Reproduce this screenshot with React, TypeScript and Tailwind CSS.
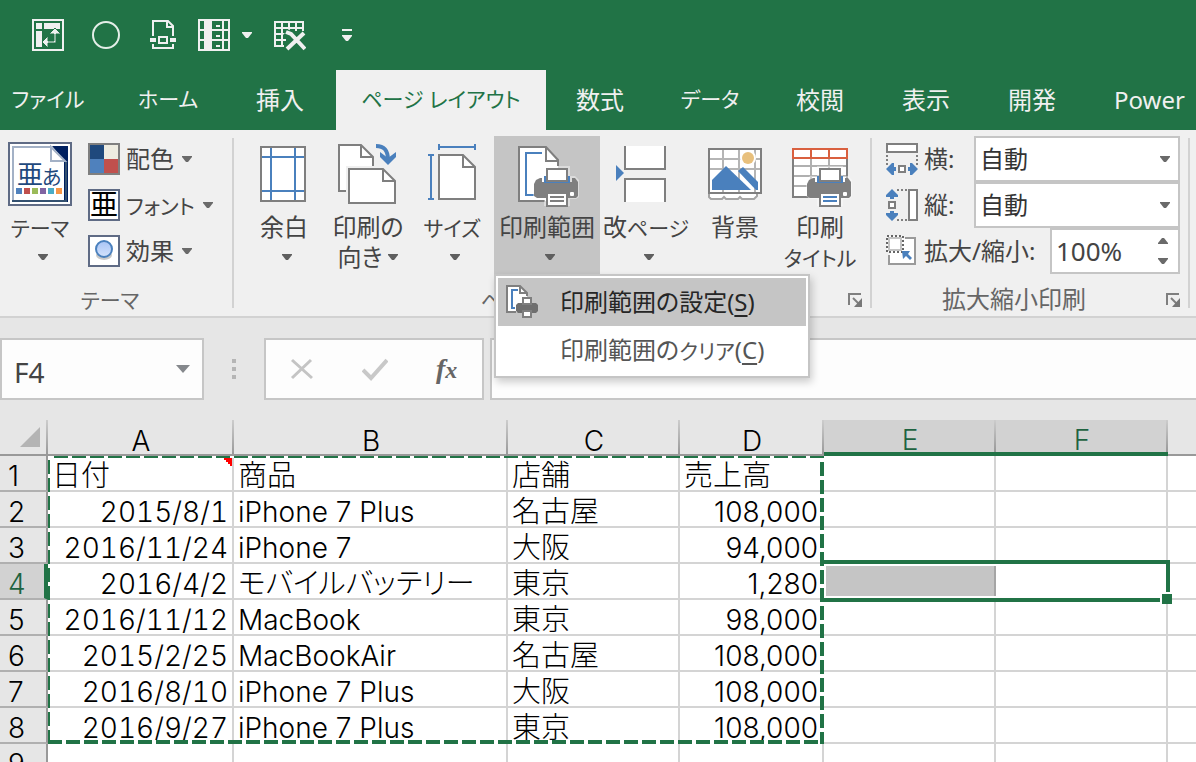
import React, { useState } from 'react'
import clsx from 'clsx'

const UI_FONT =
    "font-['Noto_Sans','Noto_Sans_CJK_JP',sans-serif] [font-feature-settings:'palt']"
const CELL_FONT =
    "font-['Inter','Noto_Sans_CJK_JP',sans-serif] [font-feature-settings:'palt'] font-light"

const GRAY = '#7f7f7f'
const BLUE = '#4a80bd'

type IconProps = { className?: string }

const isKana = (text: string) => /^[\u30a0-\u30ff ]+$/.test(text)
const isJapanese = (text: string) => /[\u3040-\u9fff]/.test(text)

/* ---------- small glyphs ---------- */

const Caret = ({ className = 'text-[#6a6a6a]' }: IconProps) => (
    <svg
        width="10"
        height="6"
        viewBox="0 0 10 6"
        className={clsx('shrink-0', className)}
        aria-hidden="true"
    >
        <path d="M0 0h10v1L6 6H4L0 1z" fill="currentColor" />
    </svg>
)

const Launcher = ({ label }: { label: string }) => (
    <button type="button" aria-label={label} className="absolute right-2 top-2">
        <svg width="14" height="16" viewBox="0 0 14 16">
            <path d="M1 13V2h12" fill="none" stroke={GRAY} strokeWidth="2" />
            <path d="M5 6l7 7" stroke={GRAY} strokeWidth="2" />
            <path d="M14 6v9H6z" fill="#777" />
        </svg>
    </button>
)

/* ---------- quick access icons ---------- */

const PivotIcon = () => (
    <svg width="32" height="32" viewBox="0 0 32 32" fill="#f0f0f0">
        <rect x="1" y="1" width="30" height="30" fill="none" stroke="#f0f0f0" strokeWidth="2" />
        <path d="M4 4h6v6H4zM12 4h16v6H12zM4 12h6v16H4z" />
        <path d="M23 9l6 6h-5v9h-8v5l-6-6 6-6v5h6v-7h-5z" stroke="#217346" />
    </svg>
)

const CircleIcon = () => (
    <svg width="28" height="28" viewBox="0 0 28 28">
        <circle cx="14" cy="14" r="13" fill="none" stroke="#e4eee8" strokeWidth="2" />
    </svg>
)

const PrintPreviewIcon = () => (
    <svg width="26" height="30" viewBox="0 0 26 30" fill="none" stroke="#f0f0f0" strokeWidth="2">
        <path d="M3 16V1h15l5 5v10M17 1v6h6" />
        <path d="M3 24v4h20v-4" />
        <rect x="9" y="17" width="8" height="6" />
        <path d="M0 20h6M20 20h6" strokeWidth="4" />
    </svg>
)

const FreezeIcon = () => (
    <svg width="32" height="32" viewBox="0 0 32 32">
        <rect width="32" height="32" fill="#f0f0f0" />
        <path
            d="M2 2h4v8H2zM2 12h4v8H2zM2 22h4v8H2zM14 2h10v8H14zM14 12h10v8H14zM14 22h10v8H14zM26 2h4v8h-4zM26 12h4v8h-4zM26 22h4v8h-4z"
            fill="#217346"
        />
        <path d="M18 7h4M18 17h4M18 27h4" stroke="#f0f0f0" strokeWidth="2" />
    </svg>
)

const DeleteTableIcon = () => (
    <svg width="32" height="32" viewBox="0 0 32 32" fill="none" stroke="#f0f0f0" strokeWidth="2">
        <path d="M0 3h30M1 2v26M0 9h30M29 2v10M8 2v24M15 2v16M22 2v10M0 15h16M0 21h12M0 27h10" />
        <path d="M12 13l17 17M30 14L13 30" stroke="#217346" strokeWidth="8" />
        <path d="M12 13l5 2 14 15M30 14L13 30" strokeWidth="4" />
    </svg>
)

/* ---------- ribbon icons ---------- */

const Printer = ({ lines = GRAY }: { lines?: string }) => (
    <g>
        <path
            d="M29 24h26v10h5l4 4v17l-3 2h-6v7H29v-7h-7l-4-3V38l4-4h7z"
            fill="#fff"
            opacity=".4"
        />
        <path
            d="M19 42l2-4 4-2h2v4h30v-4h3l3 4v14l-2 2H22l-3-2z"
            fill={GRAY}
        />
        <rect x="29" y="34" width="26" height="7" fill={BLUE} />
        <rect x="32" y="27" width="20" height="12" fill="#fff" stroke={GRAY} strokeWidth="2" />
        <rect x="55" y="50" width="4" height="4" rx="1" fill="#fff" />
        <rect x="32" y="51" width="20" height="13" fill="#fff" stroke={GRAY} strokeWidth="2" />
        <path d="M35 55h14M35 59h14" stroke={lines} strokeWidth="2" />
    </g>
)

const IconFrame = ({ children }: { children: React.ReactNode }) => (
    <svg width="64" height="66" viewBox="0 0 64 66" fill="none" strokeWidth="2" aria-hidden="true">
        {children}
    </svg>
)

const ThemeIcon = () => (
    <IconFrame>
        <rect x="1" y="1" width="62" height="62" fill="#fff" stroke="#5f6b85" />
        <path d="M44 4h16v56h-4V18z" fill="#002060" />
        <path d="M5 60V5h38" stroke="#a3b1c6" />
        <path d="M4 59h54V20" stroke="#33506f" />
        <path d="M43 5v14h14z" fill="#fff" stroke="#a3b1c6" />
        <text x="9" y="42" fontSize="26" fill="#1f497d">亜</text>
        <text x="34" y="43" fontSize="20" fill="#1f497d">あ</text>
        <path d="M8 46h6v6H8z" fill="#4f81bd" />
        <path d="M16 46h6v6h-6z" fill="#c0504d" />
        <path d="M24 46h6v6h-6z" fill="#9bbb59" />
        <path d="M32 46h6v6h-6z" fill="#8064a2" />
        <path d="M40 46h6v6h-6z" fill="#4bacc6" />
        <path d="M48 46h6v6h-6z" fill="#f79646" />
    </IconFrame>
)

const MarginsIcon = () => (
    <IconFrame>
        <rect x="9" y="5" width="44" height="54" fill="#fff" stroke={GRAY} />
        <path d="M19 6v52M43 6v52M10 15h42M10 49h42" stroke={BLUE} />
    </IconFrame>
)

const OrientationIcon = () => (
    <IconFrame>
        <path d="M3 3h22l12 12v34H3z" fill="#fff" stroke={GRAY} />
        <path d="M25 3v12h12" stroke={GRAY} />
        <path d="M10 24h42l12 12v28H10z" fill="#f0f0f0" />
        <path d="M13 27h34l12 12v22H13z" fill="#fff" stroke={GRAY} />
        <path d="M47 27v12h12" stroke={GRAY} />
        <path d="M40 4c8 0 12 4 12 14" stroke={BLUE} strokeWidth="4" />
        <path d="M44 10v5l8 8 8-8v-5l-8 6z" fill={BLUE} />
    </IconFrame>
)

const SizeIcon = () => (
    <IconFrame>
        <path d="M19 13h24l12 12v32H19z" fill="#fff" stroke={GRAY} />
        <path d="M43 13v12h12" stroke={GRAY} />
        <path d="M19 5h36M19 2v6M55 2v6M11 13v44M8 13h6M8 57h6" stroke={BLUE} />
    </IconFrame>
)

const PrintAreaIcon = () => (
    <IconFrame>
        <path d="M4 5h27l12 13v41H4z" fill="#fff" />
        <path d="M30 59H4V5h27l12 13v6M31 5v14h12" stroke={GRAY} />
        <path d="M27 11H11v42h9" stroke={BLUE} />
        <Printer />
    </IconFrame>
)

const BreaksIcon = () => (
    <IconFrame>
        <path d="M11 4v23h40V4" fill="#fff" stroke={GRAY} />
        <path d="M11 60V37h40v23" fill="#fff" stroke={GRAY} />
        <path d="M2 23l8 8-8 8z" fill={BLUE} />
    </IconFrame>
)

const BackgroundIcon = () => (
    <IconFrame>
        <rect x="6" y="7" width="52" height="44" fill="#fff" />
        <path d="M20 7v44M36 7v44M52 7v44M6 17h52M6 27h52" stroke="#b5b5b5" />
        <rect x="6" y="7" width="52" height="44" stroke={GRAY} />
        <path d="M6 52v3l2 2h11l2-2 2 2h12l2-2 2 2h12l3-3v-2" fill="#fff" stroke="#a5a5a5" />
        <circle cx="45" cy="16" r="8" fill="#fff" />
        <circle cx="45" cy="16" r="6" fill="#e8c07d" />
        <path d="M9 48V38l14-14 25 24z" fill={BLUE} />
        <path d="M35 29l5-4 15 15v8h-2z" fill={BLUE} />
    </IconFrame>
)

const PrintTitlesIcon = () => (
    <IconFrame>
        <rect x="5" y="7" width="54" height="48" fill="#fff" />
        <path d="M23 16v38M41 16v38M6 24h52M6 34h52M6 44h52" stroke="#b0b0b0" />
        <path d="M59 16v39H5V16" stroke={GRAY} />
        <path d="M5 7h54v9H5zM23 7v9M41 7v9" stroke="#d9603f" />
        <Printer lines={BLUE} />
    </IconFrame>
)

const ColorsIcon = () => (
    <svg width="32" height="32" viewBox="0 0 32 32">
        <rect width="32" height="32" fill={GRAY} />
        <path d="M2 2h14v14H2z" fill="#1f497d" />
        <path d="M16 2h14v14H16z" fill="#eeece1" />
        <path d="M2 16h14v14H2z" fill="#4f81bd" />
        <path d="M16 16h14v14H16z" fill="#c0504d" />
    </svg>
)

const FontsIcon = () => (
    <svg width="32" height="32" viewBox="0 0 32 32" className="overflow-visible">
        <rect x="1" y="1" width="30" height="30" fill="#fff" stroke="#5f6b85" strokeWidth="2" />
        <text x="2" y="26" fontSize="28" fill="#000">亜</text>
    </svg>
)

const EffectsIcon = () => (
    <svg width="32" height="32" viewBox="0 0 32 32">
        <defs>
            <linearGradient id="orb" x1="0" y1="0" x2="0" y2="1">
                <stop offset="0" stopColor="#a9c4f5" />
                <stop offset="1" stopColor="#d3e2fc" />
            </linearGradient>
        </defs>
        <rect x="1" y="1" width="30" height="30" fill="#fff" stroke="#5f6b85" strokeWidth="2" />
        <ellipse cx="16" cy="20" rx="8" ry="5" fill="#c9c9c9" />
        <circle cx="16" cy="14" r="8" fill="url(#orb)" stroke={BLUE} strokeWidth="2" />
    </svg>
)

const WidthIcon = () => (
    <svg width="32" height="32" viewBox="0 0 32 32" fill="none" strokeWidth="2">
        <rect x="1" y="1" width="30" height="8" fill="#fff" stroke={GRAY} />
        <path d="M1 12v10M31 12v10" stroke={GRAY} strokeDasharray="2 2" />
        <rect x="13" y="23" width="6" height="6" fill="#fff" stroke={GRAY} />
        <path d="M0 26l6-6h2v4h2v4H8v4H6zM32 26l-6-6h-2v4h-2v4h2v4h2z" fill={BLUE} />
    </svg>
)

const HeightIcon = () => (
    <svg width="32" height="32" viewBox="0 0 32 32" fill="none" strokeWidth="2">
        <rect x="23" y="1" width="8" height="30" fill="#fff" stroke={GRAY} />
        <path d="M11 1h10M11 31h10" stroke={GRAY} strokeDasharray="2 2" />
        <rect x="3" y="13" width="6" height="6" fill="#fff" stroke={GRAY} />
        <path d="M6 0l6 6v2H8v2H4V8H0V6zM6 32l6-6v-2H8v-2H4v2H0v2z" fill={BLUE} />
    </svg>
)

const ScaleIcon = () => (
    <svg width="32" height="32" viewBox="0 0 32 32" fill="none" strokeWidth="2">
        <path d="M3 20v9h26V3H19" fill="#fff" stroke="#9a9a9a" />
        <rect x="1" y="1" width="16" height="16" fill="#fff" stroke="#666" strokeDasharray="2 2" />
        <rect x="3" y="3" width="12" height="12" stroke="#c4c4c4" />
        <path d="M16 16h8l-2 3 4 4-2 2-4-4-3 3z" fill={BLUE} />
    </svg>
)

/* ---------- ribbon parts ---------- */

const tabs = [
    { name: 'ファイル', className: 'w-24 mr-4' },
    { name: 'ホーム', className: 'w-28' },
    { name: '挿入', className: 'w-28' },
    { name: 'ページ レイアウト', className: 'w-[210px]', active: true },
    { name: '数式', className: 'w-27' },
    { name: 'データ', className: 'w-28' },
    { name: '校閲', className: 'w-27' },
    { name: '表示', className: 'w-26' },
    { name: '開発', className: 'w-27' },
    { name: 'Power', className: 'px-7' },
]

// Kana run narrower than kanji in the ribbon
const Label = ({ text }: { text: string }) => (
    <>
        {text.split(/([\u30a0-\u30ff]+)/).map((part, i) => (
            <span key={i} className={clsx(isKana(part) && 'text-[21px]')}>
                {part}
            </span>
        ))}
    </>
)

type BigButtonProps = {
    icon: React.ReactNode
    lines: string[]
    caret?: boolean
    active?: boolean
    className: string
}

function BigButton({ icon, lines, caret = true, active, className }: BigButtonProps) {
    return (
        <button
            type="button"
            aria-haspopup={caret ? 'menu' : undefined}
            aria-expanded={active}
            className={clsx(
                'flex flex-col items-center h-[138px] pt-1.5 shrink-0 text-[24px] leading-[30px] whitespace-nowrap',
                active && 'bg-[#c5c5c5]',
                className
            )}
        >
            {icon}
            <span className="mt-1 h-[30px]">
                <Label text={lines[0]} />
            </span>
            <span className="flex items-center h-[30px]">
                {lines[1] && (
                    <span>
                        <Label text={lines[1]} />
                    </span>
                )}
                {caret && <Caret className="ml-1.5 text-[#5f5f5f]" />}
            </span>
        </button>
    )
}

type GroupProps = {
    title: string
    launcher?: boolean
    className?: string
    children: React.ReactNode
}

function Group({ title, launcher, className, children }: GroupProps) {
    return (
        <section aria-label={title} className={clsx('flex shrink-0', className)}>
            <div className="grow">
                <div className="flex h-[154px] pt-1.5">{children}</div>
                <div className="relative h-8 text-center leading-[30px] text-[#666]">
                    <span className={clsx(launcher ? 'mr-8' : 'mr-3')}>
                        <Label text={title} />
                    </span>
                    {launcher && <Launcher label={`${title}の詳細`} />}
                </div>
            </div>
            <div className="w-0.5 my-2 bg-[#d2d2d2]" />
        </section>
    )
}

const themeItems = [
    { label: '配色', icon: <ColorsIcon /> },
    { label: 'フォント', icon: <FontsIcon /> },
    { label: '効果', icon: <EffectsIcon /> },
]

function PrintAreaMenu() {
    return (
        <div
            role="menu"
            className="absolute left-0 top-full z-10 w-[316px] border-2 border-[#c5c5c5] bg-white p-0.5 shadow-[2px_4px_8px_rgba(0,0,0,0.2)] text-[24px]"
        >
            <button
                type="button"
                role="menuitem"
                className="flex items-center w-full h-12 pl-2 bg-[#c5c5c5] text-[#262626] whitespace-nowrap"
            >
                <svg width="34" height="34" viewBox="0 0 34 34" fill="none" strokeWidth="2">
                    <path d="M1 1h13l7 7v19H1z" fill="#fff" />
                    <path d="M10 27H1V1h13l7 7v3M14 1v7h7" stroke={GRAY} />
                    <path d="M12 5H6v18h3" stroke={BLUE} />
                    <path d="M10 20l2-2h18l2 2v6l-2 2H12l-2-2z" fill="#6f6f6f" />
                    <rect x="17" y="13" width="8" height="6" fill="#fff" stroke={GRAY} />
                    <rect x="17" y="26" width="8" height="6" fill="#fff" stroke={GRAY} />
                </svg>
                <span className="ml-5">
                    印刷範囲の設定(<u className="underline-offset-4">S</u>)
                </span>
            </button>
            <button
                type="button"
                role="menuitem"
                className="flex items-center w-full h-12 pl-[62px] text-[#555] whitespace-nowrap"
            >
                <span>
                    <Label text="印刷範囲のクリア" />(<u className="underline-offset-4">C</u>)
                </span>
            </button>
        </div>
    )
}

function AutoSelect({ id, label, icon }: { id: string; label: string; icon: React.ReactNode }) {
    return (
        <div className="flex items-center h-[46px]">
            {icon}
            <label htmlFor={id} className="ml-1.5 w-[50px]">
                {label}:
            </label>
            <div className="relative flex items-center w-[206px] h-full">
                <select
                    id={id}
                    className="appearance-none w-full h-full pl-1 border-2 border-[#c5c5c5] bg-white text-[#333]"
                >
                    <option>自動</option>
                </select>
                <Caret className="absolute right-2.5 text-[#6a6a6a] pointer-events-none" />
            </div>
        </div>
    )
}

function Ribbon() {
    return (
        <div className="flex h-[188px] shrink-0 bg-[#f0f0f0] border-b-2 border-[#d2d2d2] text-[24px] leading-[30px] text-[#444]">
            <Group title="テーマ" className="w-[234px]">
                <BigButton icon={<ThemeIcon />} lines={['テーマ', '']} className="w-20" />
                <div className="ml-2">
                    {themeItems.map((item) => (
                        <button
                            key={item.label}
                            type="button"
                            className="flex items-center gap-1.5 h-[46px]"
                        >
                            {item.icon}
                            <span>
                                <Label text={item.label} />
                            </span>
                            <Caret className="ml-0.5 text-[#6a6a6a]" />
                        </button>
                    ))}
                </div>
            </Group>
            <Group title="ページ設定" launcher className="w-[638px]">
                <BigButton icon={<MarginsIcon />} lines={['余白', '']} className="ml-2 w-21" />
                <BigButton icon={<OrientationIcon />} lines={['印刷の', '向き']} className="w-21" />
                <BigButton icon={<SizeIcon />} lines={['サイズ', '']} className="w-21" />
                <div className="relative h-[138px]">
                    <BigButton
                        icon={<PrintAreaIcon />}
                        lines={['印刷範囲', '']}
                        active
                        className="w-[106px]"
                    />
                    <PrintAreaMenu />
                </div>
                <BigButton icon={<BreaksIcon />} lines={['改ページ', '']} className="w-23" />
                <BigButton icon={<BackgroundIcon />} lines={['背景']} caret={false} className="w-[86px]" />
                <BigButton icon={<PrintTitlesIcon />} lines={['印刷', 'タイトル']} caret={false} className="w-21" />
            </Group>
            <Group title="拡大縮小印刷" launcher className="w-[318px]">
                <div className="ml-3.5">
                    <AutoSelect id="fit-width" label="横" icon={<WidthIcon />} />
                    <AutoSelect id="fit-height" label="縦" icon={<HeightIcon />} />
                    <div className="flex items-center h-[46px]">
                        <ScaleIcon />
                        <label htmlFor="scale" className="ml-1.5 w-[126px] whitespace-nowrap">
                            拡大/縮小:
                        </label>
                        <div className="flex items-center w-[130px] h-full border-2 border-[#c5c5c5] bg-white">
                            <input
                                id="scale"
                                defaultValue="100%"
                                className="w-[106px] h-full pl-1 text-[26px] text-[#444] outline-none"
                            />
                            <span className="flex flex-col gap-3.5">
                                <button type="button" aria-label="拡大">
                                    <Caret className="block rotate-180 text-[#6a6a6a]" />
                                </button>
                                <button type="button" aria-label="縮小">
                                    <Caret className="block text-[#6a6a6a]" />
                                </button>
                            </span>
                        </div>
                    </div>
                </div>
            </Group>
        </div>
    )
}

/* ---------- formula bar ---------- */

function FormulaBar() {
    const [formula, setFormula] = useState('')
    return (
        <div className="flex shrink-0 h-[102px] pt-5 bg-[#e6e6e6]">
            <div className="flex items-center w-[204px] h-[62px] border-2 border-[#c6c6c6] bg-[#fdfdfd]">
                <input
                    aria-label="名前ボックス"
                    defaultValue="F4"
                    className="w-[174px] h-full pl-3 pt-1.5 text-[28px] text-[#444] outline-none"
                />
                <button type="button" aria-label="名前の一覧">
                    <svg width="14" height="8" viewBox="0 0 14 8">
                        <path d="M0 0h14L7 8z" fill="#85888c" />
                    </svg>
                </button>
            </div>
            <div className="flex flex-col justify-center gap-1 w-1 h-[62px] mx-7">
                <span className="size-1 bg-[#b5b5b5]" />
                <span className="size-1 bg-[#b5b5b5]" />
                <span className="size-1 bg-[#b5b5b5]" />
            </div>
            <div className="flex items-center w-[220px] h-[62px] border-2 border-[#c6c6c6] bg-[#fdfdfd]">
                <button type="button" aria-label="キャンセル" className="ml-6">
                    <svg width="24" height="24" viewBox="0 0 24 24">
                        <path d="M2 3l20 18M21 3L2 21" stroke="#c4c4c4" strokeWidth="3" />
                    </svg>
                </button>
                <button type="button" aria-label="入力" className="ml-12">
                    <svg width="26" height="24" viewBox="0 0 26 24">
                        <path d="M1 13l8 8L25 3" fill="none" stroke="#c8c8c8" strokeWidth="4" />
                    </svg>
                </button>
                <button
                    type="button"
                    aria-label="関数の挿入"
                    className="ml-12 font-['Liberation_Serif',serif] italic font-bold text-[28px] leading-8 text-[#666]"
                >
                    f<span className="text-[24px]">x</span>
                </button>
            </div>
            <input
                aria-label="数式バー"
                value={formula}
                onChange={(e) => setFormula(e.target.value)}
                className="grow min-w-0 h-[62px] ml-1.5 px-3 border-2 border-r-0 border-[#c6c6c6] bg-[#fdfdfd] text-[24px] outline-none"
            />
        </div>
    )
}

/* ---------- sheet ---------- */

const columns = [
    { name: 'A', width: 'w-[186px]' },
    { name: 'B', width: 'w-[274px]' },
    { name: 'C', width: 'w-[172px]' },
    { name: 'D', width: 'w-[144px]' },
    { name: 'E', width: 'w-[172px]', selected: true },
    { name: 'F', width: 'w-[172px]', selected: true },
    { name: '', width: '' },
]

const rows = [
    ['日付', '商品', '店舗', '売上高'],
    ['2015/8/1', 'iPhone 7 Plus', '名古屋', '108,000'],
    ['2016/11/24', 'iPhone 7', '大阪', '94,000'],
    ['2016/4/2', 'モバイルバッテリー', '東京', '1,280'],
    ['2016/11/12', 'MacBook', '東京', '98,000'],
    ['2015/2/25', 'MacBookAir', '名古屋', '108,000'],
    ['2016/8/10', 'iPhone 7 Plus', '大阪', '108,000'],
    ['2016/9/27', 'iPhone 7 Plus', '東京', '108,000'],
    [],
]

function Sheet() {
    return (
        <div className={clsx('relative grow overflow-hidden bg-white', CELL_FONT)}>
            <table className="w-full table-fixed border-separate border-spacing-0 text-[28px] leading-8 text-black">
                <colgroup>
                    <col className="w-12" />
                    {columns.map((col) => (
                        <col key={col.name} className={col.width} />
                    ))}
                </colgroup>
                <thead>
                    <tr className="h-9 bg-[#e6e6e6]">
                        <th className="p-0 border-b-2 border-[#999] bg-[linear-gradient(#ccc,#999)] bg-[length:2px_100%] bg-right bg-no-repeat">
                            <svg width="20" height="20" viewBox="0 0 20 20" className="ml-5">
                                <path d="M20 0v20H0z" fill="#b4b4b4" />
                            </svg>
                        </th>
                        {columns.map((col) => (
                            <th
                                key={col.name}
                                scope="col"
                                className={clsx(
                                    'p-0 font-light',
                                    col.name &&
                                        'bg-[linear-gradient(#ccc,#999)] bg-[length:2px_100%] bg-right bg-no-repeat',
                                    col.selected
                                        ? 'border-b-4 border-[#217346] bg-[#d2d2d2] text-[#1e6340]'
                                        : 'border-b-2 border-[#999]'
                                )}
                            >
                                <span className="block pt-1 h-8">{col.name}</span>
                            </th>
                        ))}
                    </tr>
                </thead>
                <tbody>
                    {rows.map((row, r) => (
                        <tr key={r} className="h-9">
                            <th
                                scope="row"
                                className={clsx(
                                    'p-0 pl-2 text-left font-light border-b-2 border-b-[#b0b0b0]',
                                    r === 3
                                        ? 'border-r-4 border-r-[#217346] bg-[#d2d2d2] text-[#1e6340]'
                                        : 'border-r-2 border-r-[#999] bg-[#e6e6e6]'
                                )}
                            >
                                <span className="block h-[34px] pt-1">{r + 1}</span>
                            </th>
                            {columns.map((col, c) => (
                                <td
                                    key={col.name}
                                    className={clsx(
                                        'relative p-0 border-b-2 border-[#d4d4d4] whitespace-nowrap',
                                        col.name && 'border-r-2',
                                        c === 0 && r > 0 && 'pr-1 text-right tabular-nums',
                                        c === 3 && r > 0 && 'pr-1 text-right',
                                        isJapanese(row[c] ?? '') && 'text-[29px]',
                                        (r === 0 || c === 1 || c === 2) && 'pl-1'
                                    )}
                                >
                                    <span className="block h-[34px] pt-1">{row[c]}</span>
                                    {r === 0 && c === 0 && (
                                        <svg
                                            width="8"
                                            height="8"
                                            viewBox="0 0 8 8"
                                            className="absolute right-0 top-0.5"
                                        >
                                            <path d="M0 0h8v8H6V6H4V4H2V2H0z" fill="#f00" />
                                        </svg>
                                    )}
                                </td>
                            ))}
                        </tr>
                    ))}
                </tbody>
            </table>
            {/* copy marquee and current selection */}
            <svg
                width="1180"
                height="330"
                viewBox="0 0 1180 330"
                fill="none"
                stroke="#217346"
                className="absolute left-0 top-0 pointer-events-none"
            >
                <path d="M48 37h776M49 36v288" stroke="#fff" strokeWidth="2" />
                <path d="M822 36v288M48 322h776" stroke="#fff" strokeWidth="4" />
                <path d="M54 37h770M49 40v284" strokeWidth="2" strokeDasharray="14 4" />
                <path d="M822 42v282M48 322h776" strokeWidth="4" strokeDasharray="14 4" />
                <path d="M824 144h346v36H824z" stroke="none" fill="#fff" />
                <path d="M826 146h168v30H826z" stroke="none" fill="#c5c5c5" />
                <path d="M994 146h2v30h-2z" stroke="none" fill="#a5a5a5" />
                <path d="M820 180h340M820 142h350M1168 140v32" strokeWidth="4" />
                <path d="M1162 174h10v10h-10z" stroke="none" fill="#217346" />
            </svg>
        </div>
    )
}

export default function App() {
    return (
        <div
            lang="ja"
            className={clsx('flex flex-col h-screen overflow-hidden', UI_FONT)}
        >
            <header className="shrink-0 bg-[#217346] text-[#f0f0f0]">
                <div className="flex items-center h-[70px] pl-8">
                    <button type="button" aria-label="ピボットテーブル"><PivotIcon /></button>
                    <button type="button" aria-label="円" className="ml-7"><CircleIcon /></button>
                    <button type="button" aria-label="印刷プレビュー" className="ml-7.5"><PrintPreviewIcon /></button>
                    <button type="button" aria-label="ウィンドウ枠の固定" className="flex items-center gap-3 ml-5.5">
                        <FreezeIcon />
                        <Caret className="text-[#f0f0f0]" />
                    </button>
                    <button type="button" aria-label="シートの行を削除" className="ml-5.5"><DeleteTableIcon /></button>
                    <button type="button" aria-label="クイック アクセスのカスタマイズ" className="ml-9">
                        <svg width="10" height="12" viewBox="0 0 10 12" fill="#f0f0f0">
                            <path d="M0 0h10v2H0zM0 6h10v1L6 12H4L0 7z" />
                        </svg>
                    </button>
                </div>
                <nav role="tablist" className="flex h-[60px] overflow-hidden">
                    {tabs.map((tab) => (
                        <button
                            key={tab.name}
                            type="button"
                            role="tab"
                            aria-selected={!!tab.active}
                            className={clsx(
                                'shrink-0 text-center whitespace-nowrap',
                                isKana(tab.name) ? 'text-[21px]' : 'text-[24px]',
                                tab.active && 'bg-[#f0f0f0] text-[#217346]',
                                tab.className
                            )}
                        >
                            {tab.name}
                        </button>
                    ))}
                </nav>
            </header>
            <Ribbon />
            <FormulaBar />
            <Sheet />
        </div>
    )
}
